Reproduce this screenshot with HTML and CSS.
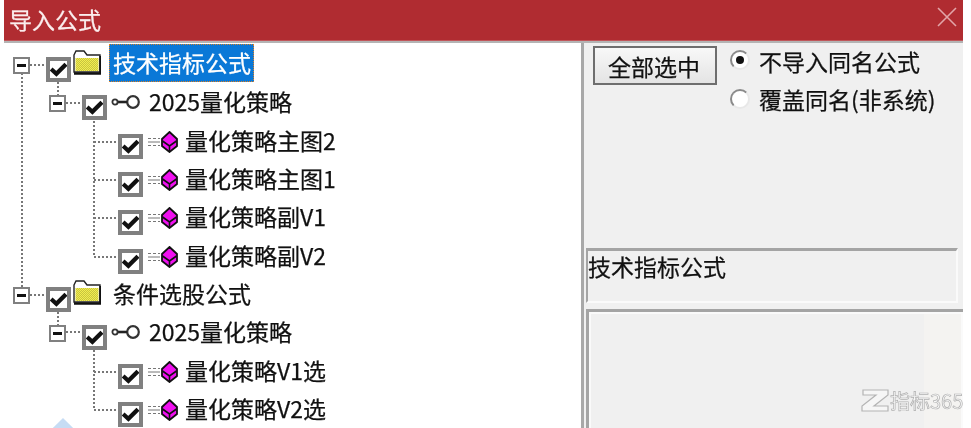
FILE: index.html
```html
<!DOCTYPE html>
<html lang="en">
<head>
  <meta charset="UTF-8">
  <title>导入公式</title>
  <link rel="stylesheet" href="styles.css">
</head>
<body>
  <svg width="0" height="0" class="defs">
    <defs>
      <pattern id="dither" width="2" height="2" patternUnits="userSpaceOnUse">
        <rect width="2" height="2" fill="#f2ee50"/>
        <rect width="1" height="1" fill="#c8c440"/>
        <rect x="1" y="1" width="1" height="1" fill="#c8c440"/>
      </pattern>
      <symbol id="folder" viewBox="0 0 28 25">
        <path d="M1 5 L3 1 H11 L14 5 H27 V22 H1 Z" fill="#fff" stroke="#222" stroke-width="1.4"/>
        <rect x="2.5" y="8" width="23" height="13" fill="url(#dither)"/>
        <path d="M1 23.5 H27.5 V6" fill="none" stroke="#111" stroke-width="2.4"/>
      </symbol>
      <symbol id="key" viewBox="0 0 29 16">
        <circle cx="22" cy="8" r="5.8" fill="#fff" stroke="#333" stroke-width="2.2"/>
        <path d="M16 8 H5" stroke="#222" stroke-width="2.6"/>
        <circle cx="4" cy="8" r="2.6" fill="#fff" stroke="#333" stroke-width="1.8"/>
      </symbol>
      <symbol id="gem" viewBox="0 0 31 22">
        <path d="M1 7.5 H4 M6 7.5 H9 M11 7.5 H13 M1 11 H13 M1 14.5 H4 M6 14.5 H9 M11 14.5 H13" stroke="#777" stroke-width="1" fill="none"/>
        <path d="M22.5 1 L30 8 V15 L22.5 21 L15 15 V8 Z" fill="#f010f0" stroke="#111" stroke-width="1.8"/>
        <path d="M15.5 10 L22.5 15 L29.5 10 M22.5 15 V20" fill="none" stroke="#111" stroke-width="1.6"/>
      </symbol>
      <symbol id="tick" viewBox="0 0 16 14">
        <path d="M1 6.5 L6 11 L15 2" fill="none" stroke="#111" stroke-width="4"/>
      </symbol>
    </defs>
  </svg>

  <div class="window">
    <header class="titlebar">
      <span class="title">导入公式</span>
      <svg class="close" width="20" height="20" viewBox="0 0 20 20"><path d="M1 1 L19 19 M19 1 L1 19" stroke="#e2a5a8" stroke-width="1.6"/></svg>
    </header>

    <div class="body">
      <div class="tree">
        <!-- dotted connectors sit behind the rows -->
        <svg class="lines" width="200" height="387">
          <g stroke="#777" stroke-width="2" stroke-dasharray="2 2" fill="none">
            <path d="M22 32 V247 M30 24 H47 M30 254 H47"/>
            <path d="M58 41 V55 M66 62 H83"/>
            <path d="M94 80 V216 H119 M94 101 H119 M94 139 H119 M94 177 H119"/>
            <path d="M58 271 V285 M66 291 H83"/>
            <path d="M94 309 V369 H119 M94 331 H119"/>
          </g>
        </svg>

        <div class="row lv0">
          <span class="exp"></span><span class="chk"><svg class="tick"><use href="#tick"/></svg></span>
          <svg class="ico folder"><use href="#folder"/></svg>
          <span class="label selected">技术指标公式</span>
        </div>
        <div class="row lv1">
          <span class="exp"></span><span class="chk"><svg class="tick"><use href="#tick"/></svg></span>
          <svg class="ico key"><use href="#key"/></svg>
          <span class="label">2025量化策略</span>
        </div>
        <div class="row lv2">
          <span class="chk"><svg class="tick"><use href="#tick"/></svg></span>
          <svg class="ico gem"><use href="#gem"/></svg>
          <span class="label">量化策略主图2</span>
        </div>
        <div class="row lv2">
          <span class="chk"><svg class="tick"><use href="#tick"/></svg></span>
          <svg class="ico gem"><use href="#gem"/></svg>
          <span class="label">量化策略主图1</span>
        </div>
        <div class="row lv2">
          <span class="chk"><svg class="tick"><use href="#tick"/></svg></span>
          <svg class="ico gem"><use href="#gem"/></svg>
          <span class="label">量化策略副V1</span>
        </div>
        <div class="row lv2">
          <span class="chk"><svg class="tick"><use href="#tick"/></svg></span>
          <svg class="ico gem"><use href="#gem"/></svg>
          <span class="label">量化策略副V2</span>
        </div>
        <div class="row lv0">
          <span class="exp"></span><span class="chk"><svg class="tick"><use href="#tick"/></svg></span>
          <svg class="ico folder"><use href="#folder"/></svg>
          <span class="label">条件选股公式</span>
        </div>
        <div class="row lv1">
          <span class="exp"></span><span class="chk"><svg class="tick"><use href="#tick"/></svg></span>
          <svg class="ico key"><use href="#key"/></svg>
          <span class="label">2025量化策略</span>
        </div>
        <div class="row lv2">
          <span class="chk"><svg class="tick"><use href="#tick"/></svg></span>
          <svg class="ico gem"><use href="#gem"/></svg>
          <span class="label">量化策略V1选</span>
        </div>
        <div class="row lv2">
          <span class="chk"><svg class="tick"><use href="#tick"/></svg></span>
          <svg class="ico gem"><use href="#gem"/></svg>
          <span class="label">量化策略V2选</span>
        </div>
        <span class="corner-mark"></span>
      </div>

      <div class="side">
        <div class="controls">
          <button class="btn">全部选中</button>
          <div class="radios">
            <div class="radio-row"><span class="radio on"></span>不导入同名公式</div>
            <div class="radio-row"><span class="radio"></span>覆盖同名(非系统)</div>
          </div>
        </div>
        <div class="name-box">技术指标公式</div>
        <div class="info-box"></div>
      </div>
    </div>
  </div>

  <!-- watermark -->
  <div class="mark">
    <svg width="30" height="25" viewBox="0 0 30 25"><path d="M3 2 H28 V7 L14 18 H28 V23 H2 V18 L16 7 H3 Z" fill="#f6f6f6" stroke="#b4b4b4" stroke-width="1.2"/></svg>
    <span class="mark-text">指标365</span>
  </div>
</body>
</html>
```

FILE: styles.css
```css
* { box-sizing: border-box; margin: 0; padding: 0; }
html, body { height: 100%; }
body {
  background: #fff;
  overflow: hidden;
  font-family: "Noto Sans CJK SC", "Liberation Sans", sans-serif;
  font-size: 23px;
  color: #111;
  -webkit-text-stroke: 0.25px currentColor;
}
.defs { position: absolute; }

/* the reference is a soft, upscaled capture */
.window, .mark { filter: blur(0.45px); }

.window {
  position: relative;
  width: 959px; height: 428px;
  margin-left: 4px;
  display: flex; flex-direction: column;
}
.titlebar {
  height: 41px; flex: none;
  background: #b02c31;
  display: flex; justify-content: space-between; align-items: center;
  padding: 0 6px 0 5px;
  border-bottom: 1px solid #c0565a;
}
.title { color: #fbeeee; line-height: 1; margin-top: -2px; }
.close { margin-top: -6px; }

.body { flex: 1; display: flex; min-height: 0; border-top: 2px solid #b4b4b4; }

/* tree */
.tree {
  position: relative;
  width: 580px; flex: none;
  background: #fff;
  padding-top: 3px;
  border-right: 3px solid #a8a8a8;
  overflow: hidden;
}
.lines { position: absolute; left: -4px; top: -2px; }
.row {
  position: relative;
  height: 38.33px;
  display: flex; align-items: center;
  white-space: nowrap;
}
.lv0 { padding-left: 9px; }
.lv1 { padding-left: 45px; }
.lv2 { padding-left: 114px; }
.exp {
  width: 17px; height: 17px; flex: none;
  margin-right: 16px;
  border: 2px solid #808080;
  background: #fff;
  position: relative;
}
.exp::after {
  content: ""; position: absolute;
  left: 2px; right: 2px; top: 5px; height: 3px;
  background: #111;
}
.chk {
  width: 25px; height: 25px; flex: none;
  border: 4px solid #808080;
  background: #fff;
  display: flex; align-items: center; justify-content: center;
  margin-top: 9px;
}
.tick { width: 17px; height: 15px; }
.ico { flex: none; }
.folder { width: 28px; height: 25px; margin: -5px 0 0 2px; }
.key { width: 29px; height: 16px; margin: -3px 0 0 4px; }
.gem { width: 31px; height: 22px; margin: 0 0 0 4px; }
.label { line-height: 30px; margin-top: -4px; }
.lv0 .label { margin-left: 12px; }
.lv1 .label { margin-left: 9px; }
.lv2 .label { margin-left: 7px; }
.lv0 .selected {
  background: #0a78d7;
  color: #fff;
  padding: 0 3px 0 4px;
  margin-left: 8px;
  height: 38px; line-height: 36px;
  outline: 1px dotted #e08020;
  outline-offset: -1px;
}
.corner-mark {
  position: absolute; left: 48px; bottom: -8px;
  width: 22px; height: 18px;
  background: #c6dcf4;
  clip-path: polygon(50% 0, 100% 60%, 100% 100%, 0 100%, 0 60%);
}

/* right side */
.side {
  flex: 1;
  background: #f0f0f0;
  padding: 3px 0 0 2px;
  display: flex; flex-direction: column;
  min-width: 0;
}
.controls { display: flex; padding-left: 7px; height: 202px; gap: 13px; }
.btn {
  width: 124px; height: 39px;
  font: inherit; color: #111;
  padding-right: 2px;
  border: 2px solid #6e6e6e;
  background: linear-gradient(#f8f8f8, #e4e4e4);
}
.radios { display: flex; flex-direction: column; }
.radio-row {
  height: 38px;
  display: flex; align-items: center; gap: 9px;
  line-height: 1;
  margin-top: -4px;
  white-space: nowrap;
}
.radio-row + .radio-row { margin-top: 0; }
.radio {
  width: 20px; height: 20px; flex: none;
  border-radius: 50%;
  background: #fff;
  border: 2px solid;
  border-color: #8a8a8a #e8e8e8 #e8e8e8 #8a8a8a;
  position: relative;
}
.radio.on { margin-top: -3px; }
.radio.on::after {
  content: ""; position: absolute;
  left: 4px; top: 4px; width: 8px; height: 8px;
  border-radius: 50%;
  background: #111;
}
.name-box {
  width: 372px; height: 55px;
  border: 2px solid #fafafa;
  border-top: 3px solid #a4a4a4;
  border-left: 2px solid #a4a4a4;
  line-height: 30px;
}
.info-box {
  flex: 1;
  margin-top: 6px;
  border-top: 3px solid #a4a4a4;
  border-left: 3px solid #a4a4a4;
  box-shadow: inset 2px 2px 0 #fafafa;
  background: linear-gradient(90deg, #f0f0f0 335px, #f4f3f1 335px, #f4f3f1 372px, #fafafa 372px);
}

.mark {
  position: absolute;
  left: 860px; top: 388px;
  display: flex; align-items: center; gap: 0;
}
.mark-text {
  font-size: 20px;
  line-height: 25px;
  color: #f8f8f8;
  -webkit-text-stroke: 0.7px #b0b0b0;
  white-space: nowrap;
}
```
